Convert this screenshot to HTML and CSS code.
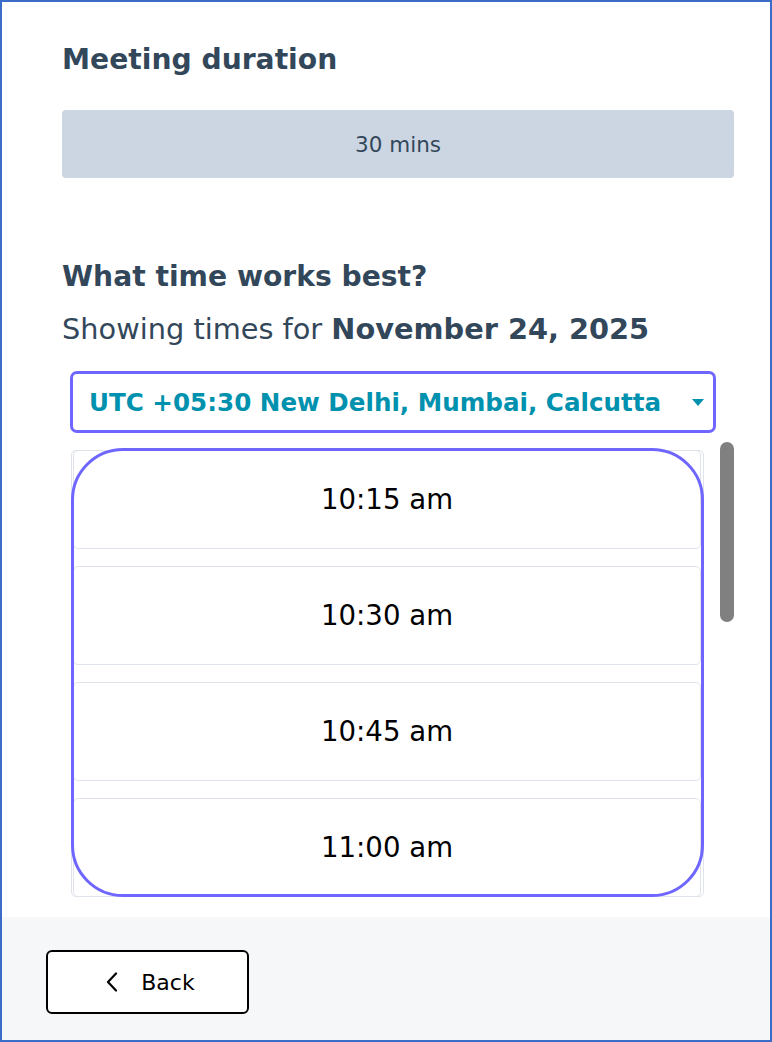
FILE: index.html
```html
<!DOCTYPE html>
<html lang="en">
<head>
<meta charset="utf-8">
<title>Meeting scheduler</title>
<link rel="stylesheet" href="styles.css">
</head>
<body>
<div class="page">
  <main class="main">
    <h2 class="title">Meeting duration</h2>
    <div class="duration">30 mins</div>
    <h2 class="title title-second">What time works best?</h2>
    <p class="showing">Showing times for <strong>November 24, 2025</strong></p>
    <div class="tz-select">
      <span class="tz-text">UTC +05:30 New Delhi, Mumbai, Calcutta</span>
      <span class="caret"></span>
    </div>
    <div class="slots-row">
      <div class="slots-ring">
        <div class="slots">
          <div class="slot slot-first">10:15 am</div>
          <div class="slot">10:30 am</div>
          <div class="slot">10:45 am</div>
          <div class="slot">11:00 am</div>
        </div>
      </div>
      <div class="scrollbar"><div class="thumb"></div></div>
    </div>
  </main>
  <footer class="footer">
    <button class="back-btn" type="button">
      <svg class="chev" width="12" height="20" viewBox="0 0 12 20" aria-hidden="true"><polyline points="10,1.5 2,10 10,18.5" fill="none" stroke="#000" stroke-width="2.2" stroke-linecap="round" stroke-linejoin="round"/></svg>
      <span>Back</span>
    </button>
  </footer>
</div>
</body>
</html>
```

FILE: styles.css
```css
* { box-sizing: border-box; }
html, body { margin: 0; padding: 0; background: #fff; }
body { font-family: "DejaVu Sans", "Liberation Sans", sans-serif; color: #33475b; }

.page {
  width: 772px;
  height: 1042px;
  border: 2px solid #3b6cc7;
  display: flex;
  flex-direction: column;
  overflow: hidden;
}

.main {
  flex: 1;
  padding: 40px 36px 0 60px;
  display: flex;
  flex-direction: column;
}

.title {
  margin: 0;
  font-size: 28.2px;
  line-height: 36px;
  font-weight: 700;
  color: #33475b;
}
.title-second { margin-top: 81px; }

.duration {
  margin-top: 32px;
  height: 68px;
  background: #cbd6e2;
  border-radius: 4px;
  display: flex;
  align-items: center;
  justify-content: center;
  font-size: 21.5px;
  color: #33475b;
}

.showing {
  margin: 16px 0 0;
  font-size: 28.8px;
  line-height: 36px;
  color: #33475b;
}
.showing strong { font-weight: 700; }

.tz-select {
  margin: 24px 18px 0 8px;
  height: 62px;
  border: 3px solid #6f66ff;
  border-radius: 7px;
  padding: 0 9px 0 16px;
  display: flex;
  align-items: center;
  justify-content: space-between;
}
.tz-text {
  font-size: 24.6px;
  font-weight: 700;
  color: #0091ae;
}
.caret {
  width: 0;
  height: 0;
  border-left: 6.5px solid transparent;
  border-right: 6.5px solid transparent;
  border-top: 7px solid #0091ae;
}

.slots-row {
  margin-top: 9px;
  display: flex;
  align-items: flex-start;
  gap: 16px;
  padding-left: 9px;
}

.slots-ring {
  position: relative;
  margin-top: 6px;
  width: 633px;
  height: 449px;
  padding-top: 2px;
}
.slots-ring::after {
  content: "";
  position: absolute;
  inset: 0;
  border: 3px solid #6f66ff;
  border-radius: 52px;
  pointer-events: none;
}

.slots {
  height: 447px;
  border: 1px solid #dfe3eb;
  border-radius: 5px;
  overflow: hidden;
  padding: 0 2px 0 1px;
  display: flex;
  flex-direction: column;
  gap: 17px;
}

.slot {
  flex: 0 0 99px;
  border: 1px solid #dfe3eb;
  border-radius: 5px;
  background: #fff;
  display: flex;
  align-items: center;
  justify-content: center;
  font-size: 27.6px;
  color: #000;
}
.slot-first { margin-top: -1px; }

.scrollbar { width: 14px; }
.thumb {
  width: 14px;
  height: 180px;
  border-radius: 7px;
  background: #808080;
}

.footer {
  flex: 0 0 123px;
  background: #f5f7f9;
  padding: 33px 0 0 44px;
}

.back-btn {
  width: 203px;
  height: 64px;
  border: 2px solid #000;
  border-radius: 6px;
  background: #fff;
  display: flex;
  align-items: center;
  justify-content: center;
  gap: 23px;
  padding: 0 0 0 6px;
  font-family: "DejaVu Sans", "Liberation Sans", sans-serif;
  font-size: 22px;
  color: #000;
  cursor: pointer;
}
.chev { display: block; }
```
